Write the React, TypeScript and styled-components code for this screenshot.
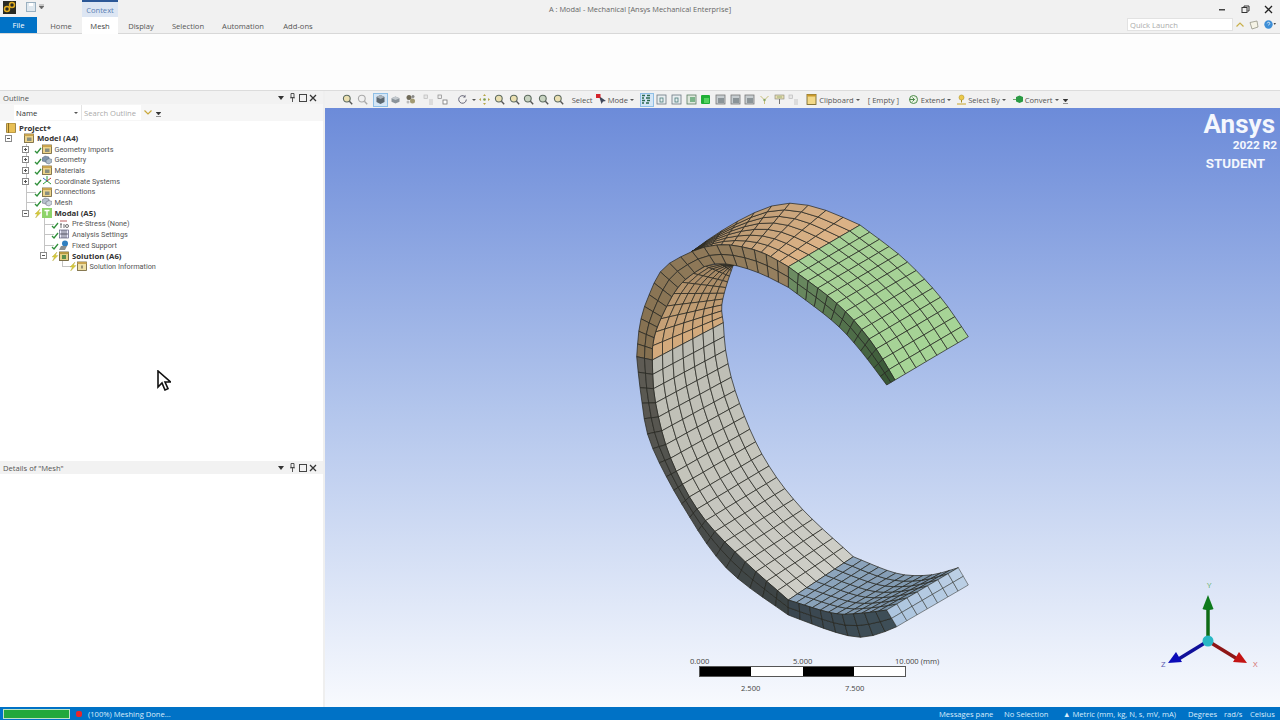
import React from "react";
import styled, { createGlobalStyle } from "styled-components";

const FONT = `"Open Sans", "Noto Sans", sans-serif`;

const Global = createGlobalStyle`
  html, body { margin: 0; padding: 0; background: #fff; overflow: hidden; }
  * { box-sizing: border-box; }
`;

const Page = styled.div`
  width: 1280px; height: 720px; display: flex; flex-direction: column; overflow: hidden; position: relative;
  font-family: ${FONT}; font-size: 7.6px; color: #444; background: #fff;
`;
const Ico = styled.svg<{ $ml?: number; $mt?: number }>`
  flex: none; margin-left: ${p => p.$ml ?? 0}px; margin-top: ${p => p.$mt ?? 0}px;
`;
const TitleBar = styled.div`
  height: 17px; display: grid; grid-template-columns: 1fr auto 1fr; background: #f1f1f1;
`;
const TitleLeft = styled.div`display: flex; align-items: flex-start; padding-left: 3px;`;
const QuickSave = styled.div`display: flex; align-items: center; gap: 3px; margin: 1px 0 0 10px; width: 56px; height: 12px;`;
const ContextTab = styled.div`
  width: 36px; height: 17px; background: #dde6f3; border-top: 2px solid #2b5797; color: #5b7fb3;
  display: flex; align-items: center; justify-content: center;
`;
const TitleText = styled.div`line-height: 17px; color: #666; font-size: 7.4px; transform: translateY(0.5px);`;
const WinControls = styled.div`display: flex; justify-content: flex-end; align-items: center; gap: 14.5px; padding: 1px 7px 0 0;`;
const TabBar = styled.div`
  height: 17px; display: flex; background: #f1f1f1; border-bottom: 1px solid #d8d8d8;
`;
const FileTab = styled.div`
  width: 37px; height: 16px; background: #0072c6; color: #fff; display: flex; align-items: center; justify-content: center;
`;
const Tab = styled.div<{ $w: number; $active?: boolean; $pl?: number }>`
  width: ${p => p.$w}px; height: ${p => (p.$active ? 17 : 16)}px; display: flex; align-items: center; justify-content: center;
  padding: 1px 0 0 ${p => p.$pl ?? 0}px;
  background: ${p => (p.$active ? "#fff" : "transparent")}; color: ${p => (p.$active ? "#444" : "#555")};
  z-index: 1;
`;
const TabRight = styled.div`margin-left: auto; display: flex; align-items: center; gap: 5px; padding-right: 4px; height: 15px;`;
const QuickInput = styled.div`
  width: 106px; height: 13px; background: #fff; border: 1px solid #e2e2e2; color: #aaa; line-height: 12px; padding-left: 2px; margin-right: -2px;
`;
const Ribbon = styled.div`height: 57px; background: #fdfdfd; border-bottom: 1px solid #dcdcdc;`;
const Main = styled.div`flex: 1; display: flex; min-height: 0;`;
const LeftPanel = styled.div`
  width: 325px; display: flex; flex-direction: column; background: #fff; border-right: 2px solid #efefef;
`;
const PaneHeader = styled.div`
  height: 13px; display: flex; align-items: center; gap: 4px; padding: 0 6px 0 3px; background: #f2f2f2; color: #555;
`;
const Gripper = styled.div`
  flex: 1; height: 5px; margin-right: 6px; opacity: .8;
  background-image: radial-gradient(#cfcfcf 0.6px, transparent 0.7px);
  background-size: 2px 2px;
`;
const PaneBtns = styled.div`display: flex; align-items: center;`;
const SearchRow = styled.div`
  height: 17px; display: flex; align-items: center; padding-left: 14px; background: #f6f6f6;
`;
const NameCombo = styled.div`
  width: 67px; height: 15px; background: #fff; display: flex; align-items: center; justify-content: space-between; padding: 0 3px 0 2px; color: #333;
`;
const SearchInput = styled.div`
  width: 60px; height: 15px; background: #fff; border-left: 1px solid #e4e4e4; color: #aaa; line-height: 16px; padding-left: 2px;
`;
const SearchTools = styled.div`display: flex; align-items: center; gap: 4px; margin-left: 3px;`;
const Tree = styled.div`height: 340px; padding-top: 1.5px;`;
const Row = styled.div<{ $start: number }>`
  position: relative; height: 10.67px; display: flex; align-items: center; padding-left: ${p => p.$start}px; white-space: nowrap; color: #444;
`;
const Expander = styled.div`width: 16px; display: flex; justify-content: center; z-index: 1;`;
const ExpBox = styled.div`
  width: 7px; height: 7px; border: 1px solid #8a8a8a; background: #fff; position: relative;
  &::before { content: ""; position: absolute; left: 1px; right: 1px; top: 2px; height: 1px; background: #555; }
`;
const ExpPlus = styled(ExpBox)`
  &::after { content: ""; position: absolute; top: 1px; bottom: 1px; left: 2px; width: 1px; background: #555; }
`;
const Mark = styled.div`width: 8px; height: 10px; display: flex; align-items: flex-end; z-index: 1;`;
const IconSlot = styled.div`width: 10px; height: 10px; margin-right: 3px; display: flex; z-index: 1;`;
const Label = styled.span<{ $bold?: boolean }>`
  font-family: ${p => (p.$bold ? FONT : `Roboto, ${FONT}`)};
  font-size: ${p => (p.$bold ? 7.8 : 7.3)}px;
  font-weight: ${p => (p.$bold ? 700 : 400)}; color: ${p => (p.$bold ? "#333" : "#555")};
`;
const VLine = styled.div<{ $x: number; $half?: boolean }>`
  position: absolute; left: ${p => p.$x}px; top: 0; width: 1px; height: ${p => (p.$half ? "50%" : "100%")}; background: #c4c4c4;
`;
const HLine = styled.div<{ $x: number }>`
  position: absolute; left: ${p => p.$x}px; top: 50%; width: 10px; height: 1px; background: #c4c4c4;
`;
const DetailBody = styled.div`flex: 1;`;
const Viewport = styled.div`flex: 1; display: flex; flex-direction: column; min-width: 0;`;
const Toolbar = styled.div`
  height: 17px; display: flex; align-items: center; padding-left: 15px; background: #f1f1f1; color: #555; white-space: nowrap;
`;
const TB = styled.div<{ $w?: number; $active?: boolean }>`
  width: ${p => p.$w ?? 14.7}px; height: 14px; flex: none; display: flex; align-items: center; justify-content: center;
  background: ${p => (p.$active ? "#d4e6f6" : "transparent")}; outline: ${p => (p.$active ? "1px solid #8fbfe6" : "none")}; outline-offset: -1px;
`;
const TBText = styled.div<{ $w: number; $pl?: number }>`
  width: ${p => p.$w}px; padding-left: ${p => p.$pl ?? 0}px; flex: none; display: flex; align-items: center; gap: 2px;
`;
const Caret = styled.i`
  display: inline-block; width: 0; height: 0; border-left: 2px solid transparent; border-right: 2px solid transparent; border-top: 2px solid #555;
`;
const TBSep = styled.div<{ $w: number }>`
  width: ${p => p.$w}px; flex: none; height: 13px;
`;
const Canvas = styled.div`
  flex: 1; position: relative; overflow: hidden;
  background: linear-gradient(180deg, #6c8bd9 0%, #b2c5ec 50%, #f8fafe 100%);
`;
const MeshSvg = styled.svg`position: absolute; inset: 0; width: 100%; height: 100%;`;
const Logo = styled.div`
  position: absolute; right: 3px; top: 2px; width: 80px; color: #f4f7fd; font-family: Roboto, sans-serif; font-weight: 700; text-align: right;
`;
const LogoMain = styled.div`font-size: 26px; line-height: 28px; margin-right: 2px; font-weight: 700;`;
const LogoYear = styled.div`font-size: 11.8px; line-height: 14px; margin-top: 0;`;
const LogoStudent = styled.div`font-size: 13.4px; line-height: 15px; margin: 4px 12px 0 0;`;
const Scale = styled.div`position: absolute; left: 374px; top: 547px; width: 207px; height: 40px; color: #444; font-size: 7.6px;`;
const ScaleSegs = styled.div`
  position: absolute; top: 11px; left: 0; right: 0; height: 11px; display: flex; border: 1px solid #555;
`;
const Seg = styled.div<{ $dark?: boolean }>`flex: 1; background: ${p => (p.$dark ? "#000" : "#fff")};`;
const ScaleLabel = styled.span<{ $x: number; $y: number }>`
  position: absolute; left: ${p => p.$x}px; top: ${p => p.$y}px; white-space: nowrap; line-height: 10px;
`;
const TriadSvg = styled.svg`position: absolute; left: 830px; top: 468px; width: 110px; height: 100px;`;
const Status = styled.div`
  height: 13px; display: flex; align-items: center; background: #0072c6; color: #d8ecfb; white-space: nowrap; padding-left: 3px;
`;
const Progress = styled.div`
  width: 67px; height: 10px; background: #22a83c; border: 1px solid #bfe3c6; margin-right: 6px;
`;
const Dot = styled.div`width: 6px; height: 6px; background: #e8262a; border-radius: 2px; margin-right: 6px;`;
const StatusRight = styled.div`margin-left: auto; display: flex; align-items: center;`;
const StatusItem = styled.span<{ $w: number }>`width: ${p => p.$w}px; display: inline-block;`;
const Pointer = styled.svg`position: absolute; left: 156px; top: 370px; width: 15px; height: 21px;`;

/* ---------- mesh geometry ---------- */
type P = [number, number];
const z5 = (l: number[][]): P[] => l.map(([x, y]) => [620 + x / 3, 190 + y / 3]);
const z6 = (l: number[][]): P[] => l.map(([x, y]) => [620 + x / 3, 400 + y / 3]);
function sample(pts: P[], n: number): P[] {
  const dense: P[] = [];
  for (let i = 0; i < pts.length - 1; i++) {
    const p0 = pts[Math.max(0, i - 1)], p1 = pts[i], p2 = pts[i + 1], p3 = pts[Math.min(pts.length - 1, i + 2)];
    for (let s = 0; s < 14; s++) {
      const t = s / 14, t2 = t * t, t3 = t2 * t;
      dense.push([0, 1].map(k => 0.5 * (2 * p1[k] + (p2[k] - p0[k]) * t + (2 * p0[k] - 5 * p1[k] + 4 * p2[k] - p3[k]) * t2 + (3 * p1[k] - p0[k] - 3 * p2[k] + p3[k]) * t3)) as P);
    }
  }
  dense.push(pts[pts.length - 1]);
  const len = [0];
  for (let i = 1; i < dense.length; i++) len.push(len[i - 1] + Math.hypot(dense[i][0] - dense[i - 1][0], dense[i][1] - dense[i - 1][1]));
  const out: P[] = [];
  let j = 0;
  for (let i = 0; i <= n; i++) {
    const target = (len[len.length - 1] * i) / n;
    while (j < dense.length - 2 && len[j + 1] < target) j++;
    const f = (target - len[j]) / Math.max(1e-6, len[j + 1] - len[j]);
    out.push([dense[j][0] + (dense[j + 1][0] - dense[j][0]) * f, dense[j][1] + (dense[j + 1][1] - dense[j][1]) * f]);
  }
  return out;
}
type RGB = [number, number, number];
type Cell = { points: string; fill: string; dark: number };
function strip(a: P[], b: P[], nu: number, nv: number, c0: RGB, c1: RGB, dark = 0.8): Cell[] {
  const A = sample(a, nu), B = sample(b, nu), cells: Cell[] = [];
  const at = (i: number, j: number): string => {
    const t = j / nv;
    return `${(A[i][0] + (B[i][0] - A[i][0]) * t).toFixed(1)},${(A[i][1] + (B[i][1] - A[i][1]) * t).toFixed(1)}`;
  };
  for (let i = 0; i < nu; i++) {
    const t = (i + 0.5) / nu;
    const c = [0, 1, 2].map(k => Math.round(c0[k] + (c1[k] - c0[k]) * t));
    for (let j = 0; j < nv; j++) {
      cells.push({ points: `${at(i, j)} ${at(i + 1, j)} ${at(i + 1, j + 1)} ${at(i, j + 1)}`, fill: `rgb(${c.join(",")})`, dark });
    }
  }
  return cells;
}
const INNER_L1 = z5([[340, 225], [280, 222], [235, 240], [175, 290], [125, 380], [100, 450], [97, 510]]);
const INNER_R1 = z5([[340, 225], [318, 290], [305, 350], [310, 398]]);
const INNER_L2 = [...z5([[97, 510]]), ...z6([[105, 0], [150, 170], [240, 340], [370, 480], [505, 600]])];
const INNER_R2 = [...z5([[310, 398], [320, 500], [355, 630]]), ...z6([[430, 170], [540, 320], [700, 470]])];
const INNER_L3 = z6([[505, 600], [640, 640], [720, 640], [800, 630]]);
const INNER_R3 = z6([[700, 470], [830, 520], [930, 525], [1015, 503]]);
const TOP_F1 = z5([[215, 185], [300, 125], [410, 65], [500, 40], [600, 55], [720, 105]]);
const TOP_N1 = z5([[215, 185], [270, 168], [330, 165], [420, 185], [505, 230]]);
const TOP_F2 = z5([[720, 105], [850, 205], [960, 320], [1045, 440]]);
const TOP_N2 = z5([[505, 230], [650, 340], [750, 450], [825, 570]]);
const RIM_O1 = z5([[825, 570], [750, 450], [650, 340], [505, 230]]);
const RIM_I1 = z5([[800, 585], [720, 480], [640, 395], [505, 292]]);
const RIM_O2 = z5([[505, 230], [420, 185], [330, 165], [270, 168], [215, 185], [130, 235], [85, 320], [60, 400], [50, 500]]);
const RIM_I2 = z5([[505, 292], [420, 250], [340, 225], [280, 222], [235, 240], [175, 290], [125, 380], [100, 450], [97, 510]]);
const RIM_O3 = [...z5([[50, 500]]), ...z6([[65, 0], [92, 130], [190, 320], [320, 505], [505, 645]])];
const RIM_I3 = [...z5([[97, 510]]), ...z6([[105, 0], [150, 170], [240, 340], [370, 480], [505, 600]])];
const RIM_O4 = z6([[505, 645], [640, 695], [720, 712], [780, 700], [830, 680]]);
const RIM_I4 = z6([[505, 600], [640, 640], [720, 640], [800, 630]]);
const END_A = z6([[800, 630], [1015, 503]]);
const END_B = z6([[830, 680], [1045, 555]]);

const CELLS: Cell[] = [
  ...strip(INNER_L1, INNER_R1, 10, 7, [150, 125, 92], [214, 172, 126]),
  ...strip(INNER_L2, INNER_R2, 20, 7, [188, 188, 178], [206, 206, 200]),
  ...strip(INNER_L3, INNER_R3, 12, 7, [142, 166, 190], [120, 145, 168]),
  ...strip(TOP_N1, TOP_F1, 10, 7, [168, 140, 104], [222, 180, 136]),
  ...strip(TOP_N2, TOP_F2, 13, 7, [166, 208, 150], [166, 212, 150]),
  ...strip(RIM_O1, RIM_I1, 13, 2, [55, 85, 52], [110, 142, 100]),
  ...strip(RIM_O2, RIM_I2, 18, 2, [150, 128, 96], [132, 112, 80]),
  ...strip(RIM_O3, RIM_I3, 20, 2, [95, 92, 84], [58, 66, 68]),
  ...strip(RIM_O4, RIM_I4, 9, 2, [58, 70, 78], [62, 78, 88]),
  ...strip(END_A, END_B, 7, 2, [172, 196, 222], [188, 208, 230], 0.55),
];

/* ---------- small drawn icons ---------- */
const Check = () => (
  <svg width="8" height="7" viewBox="0 0 8 7"><path d="M1 4l2 2 4-5" fill="none" stroke="#2f8f3a" strokeWidth="1.3" /></svg>
);
const Bolt = () => (
  <svg width="8" height="9" viewBox="0 0 8 9"><path d="M6 0L1 5h2.400L1.600 9 7 3.600H4.400z" fill="#d8cc3a" stroke="#a89a20" strokeWidth=".3" /></svg>
);
type TreeKind = "book" | "box" | "geo" | "coord" | "mesh" | "modal" | "pre" | "set" | "sup" | "sol" | "info";
const TreeIcon = ({ kind }: { kind: TreeKind }) => {
  const s = { width: 10, height: 10, viewBox: "0 0 10 10" };
  switch (kind) {
    case "book":
      return <svg {...s}><rect x=".5" y="0" width="9" height="10" rx="1" fill="#e8bf55" stroke="#7a6020" strokeWidth=".7" /><rect x="2" y="0" width="1" height="10" fill="#8a6d22" /></svg>;
    case "box":
      return <svg {...s}><rect x=".5" y="1" width="9" height="8.5" fill="#ecd38a" stroke="#6b5c32" strokeWidth=".8" /><rect x=".5" y="1" width="9" height="2" fill="#c9a44f" /><rect x="3" y="4.5" width="4.5" height="3.5" fill="#8a8f80" /></svg>;
    case "geo":
      return <svg {...s}><path d="M0 3l3-2 4 1v3l-3 2-4-1z" fill="#7f95ad" stroke="#55677a" strokeWidth=".5" /><path d="M4 5l3-1.500 3 1V7l-3 2-3-1z" fill="#aebdca" stroke="#55677a" strokeWidth=".5" /></svg>;
    case "coord":
      return <svg {...s}><path d="M5 0v5M5 5l4 3M5 5L1 8" stroke="#2d9a3a" strokeWidth="1" /><path d="M5 5L9 2" stroke="#c03a30" strokeWidth="1" /><path d="M5 5L1 2" stroke="#3a60c0" strokeWidth="1" /></svg>;
    case "mesh":
      return <svg {...s}><path d="M0 3l3-2 4 1v3l-3 2-4-1z" fill="#b5c0cc" stroke="#667" strokeWidth=".5" /><path d="M4 5l3-1.500 3 1V7l-3 2-3-1z" fill="#ccd5dd" stroke="#667" strokeWidth=".5" /></svg>;
    case "modal":
      return <svg {...s}><rect width="10" height="10" fill="#8ed36a" /><path d="M2.500 2.500h5M5 2.500v5" stroke="#fff" strokeWidth="1.400" /></svg>;
    case "pre":
      return <svg {...s}><path d="M1 2h7" stroke="#a33" strokeWidth=".8" /><path d="M1 5h2M2 5v4M4 6h2M4 8h2" stroke="#333" strokeWidth=".7" fill="none" /><circle cx="8" cy="7" r="1.500" fill="none" stroke="#333" strokeWidth=".7" /></svg>;
    case "set":
      return <svg {...s}><rect x=".5" y="1" width="9" height="8" fill="#eef" stroke="#446" strokeWidth=".6" /><path d="M3 1v8M5 1v8M7 1v8M1 5h8" stroke="#334" strokeWidth=".7" /></svg>;
    case "sup":
      return <svg {...s}><circle cx="6" cy="3.600" r="3" fill="#2f7fc0" /><path d="M0 10l2-4h6l-2 4z" fill="#8a8f90" /></svg>;
    case "sol":
      return <svg {...s}><rect x=".5" y="1" width="9" height="8.500" fill="#e4cf84" stroke="#5c5028" strokeWidth=".8" /><rect x=".5" y="1" width="9" height="2" fill="#b89a42" /><rect x="3" y="4" width="4" height="4" fill="#5c8f4c" /></svg>;
    default:
      return <svg {...s}><rect x=".5" y="1" width="9" height="8.500" fill="#efe0a4" stroke="#6b5c32" strokeWidth=".8" /><rect x=".5" y="1" width="9" height="2" fill="#c9a44f" /><path d="M5 4.500v3" stroke="#444" strokeWidth="1" /></svg>;
  }
};

type ToolKind = "zoom" | "zoomg" | "zoomb" | "cube" | "cube2" | "cubes" | "pg" | "pg2" | "rot" | "pan" | "sel" | "nam" | "doc" | "docg" | "docgg" | "gray" | "ypt" | "yflag" | "clip" | "ext" | "pin" | "conv";
const ToolIcon = ({ kind }: { kind: ToolKind }) => {
  const s = { width: 11, height: 11, viewBox: "0 0 11 11" };
  if (kind === "zoom" || kind === "zoomg" || kind === "zoomb")
    return (
      <svg {...s}>
        <circle cx="4.800" cy="4.600" r="3.400" fill={kind === "zoom" ? "#eadfb0" : kind === "zoomb" ? "#c7d3c0" : "#f0f0f0"} stroke={kind === "zoomg" ? "#aaa" : "#5d6b60"} strokeWidth="1.100" />
        <path d="M7.400 7.200l2.800 3" stroke={kind === "zoomg" ? "#aaa" : "#555"} strokeWidth="1.300" />
      </svg>
    );
  switch (kind) {
    case "cube":
      return <svg {...s}><path d="M5.500 1l4 2v5l-4 2-4-2V3z" fill="#5b6770" /><path d="M1.500 3l4 2 4-2-4-2z" fill="#a9b2b9" /></svg>;
    case "cube2":
      return <svg {...s}><path d="M5.500 2.500l4 1.700v3.600l-4 1.700-4-1.700V4.200z" fill="#8b949b" /><path d="M1.500 4.200l4 1.700 4-1.700-4-1.700z" fill="#c3c9ce" /></svg>;
    case "cubes":
      return <svg {...s}><circle cx="4" cy="3.500" r="2.500" fill="#6f6a58" /><circle cx="7.500" cy="7" r="2.500" fill="#a29a72" /><circle cx="8" cy="2.500" r="1.500" fill="#888" /><circle cx="3" cy="8" r="1.500" fill="#bbb" /></svg>;
    case "pg":
      return <svg {...s}><rect x="1" y="1" width="3.500" height="3.500" fill="#e6e6e6" stroke="#bbb" strokeWidth=".7" /><path d="M6 6h4M6 8h4M6 10h4" stroke="#bbb" strokeWidth=".8" /></svg>;
    case "pg2":
      return <svg {...s}><rect x="1" y="1" width="3.500" height="3.500" fill="#eee" stroke="#888" strokeWidth=".7" /><rect x="6" y="6" width="4" height="4" fill="#fff" stroke="#777" strokeWidth=".8" /></svg>;
    case "rot":
      return <svg {...s}><path d="M9.300 5.500a3.800 3.800 0 1 1-1.300-2.900" fill="none" stroke="#667" strokeWidth="1" /><path d="M8.500 0.800v2.600H6z" fill="#667" /></svg>;
    case "pan":
      return <svg {...s}><path d="M5.500 0l1.500 2H4zM5.500 11L4 9h3zM0 5.500L2 4v3zM11 5.500L9 4v3z" fill="#b9a64a" /><circle cx="5.500" cy="5.500" r="1.300" fill="#7a9b4a" /></svg>;
    case "sel":
      return <svg {...s}><path d="M3 2l7 5-3 .5L5.500 10z" fill="#40485a" /><rect x="0" y="0" width="4.500" height="4" fill="#d4232a" /></svg>;
    case "nam":
      return <svg {...s}><path d="M1 1.500h3M6 1.500h3M1 4h2M5 4h4M1 6.500h3M6 6.500h3M1 9h2M5 9h3" stroke="#2a6a50" strokeWidth="1.300" /></svg>;
    case "doc":
      return <svg {...s}><rect x="1" y="1" width="9" height="9" fill="#e8eef0" stroke="#6b7780" strokeWidth=".8" /><rect x="4" y="4" width="3" height="4" fill="none" stroke="#4b7a7a" strokeWidth=".8" /></svg>;
    case "docg":
      return <svg {...s}><rect x="1" y="1" width="9" height="9" fill="#dfe8dd" stroke="#5a7a62" strokeWidth=".8" /><rect x="4" y="3" width="5" height="5" fill="#7cb48a" /></svg>;
    case "docgg":
      return <svg {...s}><rect x="1" y="1" width="9" height="9" rx="1" fill="#1fae36" /><rect x="4" y="4" width="5" height="5" fill="#53d35f" /></svg>;
    case "gray":
      return <svg {...s}><rect x="1" y="1" width="9" height="9" fill="#c7cdd0" stroke="#777" strokeWidth=".8" /><rect x="3" y="4" width="6" height="5" fill="#8b9498" /></svg>;
    case "ypt":
      return <svg {...s}><path d="M5.500 6V10M5.500 6L1.500 2M5.500 6L9.500 2" stroke="#c9bf7a" strokeWidth="1" /><circle cx="5.500" cy="6" r="1.200" fill="#88a866" /></svg>;
    case "yflag":
      return <svg {...s}><rect x="1" y="1" width="9" height="4" fill="#e6dcb2" stroke="#887" strokeWidth=".6" /><path d="M5.500 5v5" stroke="#777" strokeWidth="1" /><path d="M3 3h5" stroke="#8a6" strokeWidth=".8" /></svg>;
    case "clip":
      return <svg {...s}><rect x="1" y="0.500" width="9" height="10" fill="#f3d988" stroke="#6a5a20" strokeWidth=".8" /><rect x="1" y="0.500" width="9" height="2" fill="#c99a2c" /></svg>;
    case "ext":
      return <svg {...s}><circle cx="5.500" cy="5.500" r="4" fill="#e8f2e2" stroke="#4d8a4a" strokeWidth="1" /><path d="M1.500 5.500h5M4.500 3.500l2 2-2 2" stroke="#3c7d3c" strokeWidth=".9" fill="none" /></svg>;
    case "pin":
      return <svg {...s}><circle cx="5.500" cy="3.500" r="2.500" fill="#ecc94a" stroke="#a58a20" strokeWidth=".5" /><path d="M5.500 6v2.500" stroke="#a58a20" strokeWidth="1" /><path d="M1 10h9" stroke="#c9a428" strokeWidth="1" /></svg>;
    default:
      return <svg {...s}><path d="M0 5.500h3" stroke="#6aa86a" strokeWidth="1" /><path d="M3 3l3.500-1.500L10 3v4.500L6.500 9 3 7.500z" fill="#2a9a44" /></svg>;
  }
};
const PaneControls = () => (
  <PaneBtns>
    <Ico width="6" height="4" viewBox="0 0 6 4"><path d="M0 0h6L3 4z" fill="#333" /></Ico>
    <Ico width="7" height="9" viewBox="0 0 7 9" $ml={4.5}><path d="M2 .5h3v4h-3zM1 4.800h5M3.500 5v4" stroke="#444" strokeWidth=".9" fill="none" /></Ico>
    <Ico width="8" height="8" viewBox="0 0 8 8" $ml={3.5}><rect x=".5" y=".5" width="7" height="7" fill="none" stroke="#444" /></Ico>
    <Ico width="8" height="8" viewBox="0 0 8 8" $ml={2}><path d="M1 1l6 6M7 1l-6 6" stroke="#333" strokeWidth="1.300" /></Ico>
  </PaneBtns>
);

type TreeRow = {
  level: number; text: string; icon: TreeKind; bold?: boolean; mark?: "check" | "bolt"; exp?: "plus" | "minus";
  lines: { x: number; half?: boolean }[]; h?: number;
};
const ROWS: TreeRow[] = [
  { level: 1, text: "Model (A4)", icon: "box", bold: true, exp: "minus", lines: [] },
  { level: 2, text: "Geometry Imports", icon: "box", mark: "check", exp: "plus", lines: [{ x: 26 }] },
  { level: 2, text: "Geometry", icon: "geo", mark: "check", exp: "plus", lines: [{ x: 26 }] },
  { level: 2, text: "Materials", icon: "box", mark: "check", exp: "plus", lines: [{ x: 26 }] },
  { level: 2, text: "Coordinate Systems", icon: "coord", mark: "check", exp: "plus", lines: [{ x: 26 }] },
  { level: 2, text: "Connections", icon: "box", mark: "check", lines: [{ x: 26 }], h: 26 },
  { level: 2, text: "Mesh", icon: "mesh", mark: "check", lines: [{ x: 26 }], h: 26 },
  { level: 2, text: "Modal (A5)", icon: "modal", bold: true, mark: "bolt", exp: "minus", lines: [{ x: 26, half: true }] },
  { level: 3, text: "Pre-Stress (None)", icon: "pre", mark: "check", lines: [{ x: 44 }], h: 44 },
  { level: 3, text: "Analysis Settings", icon: "set", mark: "check", lines: [{ x: 44 }], h: 44 },
  { level: 3, text: "Fixed Support", icon: "sup", mark: "check", lines: [{ x: 44 }], h: 44 },
  { level: 3, text: "Solution (A6)", icon: "sol", bold: true, mark: "bolt", exp: "minus", lines: [{ x: 44, half: true }] },
  { level: 4, text: "Solution Information", icon: "info", mark: "bolt", lines: [{ x: 62, half: true }], h: 62 },
];

const TOOLS: (ToolKind | { gap: number } | { active: ToolKind })[] = [
  "zoom", "zoomg", { gap: 4 }, { active: "cube" }, "cube2", "cubes", { gap: 3.5 }, "pg", "pg2", { gap: 4.5 },
];
const TOOLS2: ToolKind[] = ["zoom", "zoom", "zoomb", "zoomb", "zoom"];
const TOOLS3: ToolKind[] = ["doc", "doc", "docg", "docgg", "gray", "gray", "gray", "ypt", "yflag", "pg"];

export default function App() {
  return (
    <Page>
      <Global />
      <TitleBar>
        <TitleLeft>
          <Ico width="13" height="13" viewBox="0 0 13 13" $mt={1}>
            <rect width="13" height="13" fill="#2a2a22" />
            <circle cx="4" cy="8" r="2.500" fill="none" stroke="#e2ac1e" strokeWidth="1.500" />
            <circle cx="9" cy="4" r="2.500" fill="none" stroke="#e2ac1e" strokeWidth="1.500" />
          </Ico>
          <QuickSave>
            <svg width="10" height="10" viewBox="0 0 10 10"><rect x=".5" y=".5" width="9" height="9" fill="#dfe8ef" stroke="#9ab0c0" /><rect x="3" y="1" width="4" height="3" fill="#fff" /></svg>
            <svg width="5" height="6" viewBox="0 0 5 6"><path d="M0 0h5M0 2h5L2.500 5z" stroke="#666" strokeWidth=".6" fill="#666" /></svg>
          </QuickSave>
          <ContextTab>Context</ContextTab>
        </TitleLeft>
        <TitleText>A : Modal - Mechanical [Ansys Mechanical Enterprise]</TitleText>
        <WinControls>
          <svg width="7" height="3" viewBox="0 0 7 3"><rect y="1" width="6" height="1.500" fill="#444" /></svg>
          <svg width="9" height="9" viewBox="0 0 9 9"><path d="M3 2.500V1h5v5H6.500" fill="none" stroke="#333" /><rect x="1" y="2.500" width="5" height="5" fill="none" stroke="#333" /></svg>
          <svg width="9" height="9" viewBox="0 0 9 9"><path d="M1 1l7 7M8 1l-7 7" stroke="#222" strokeWidth="1.300" /></svg>
        </WinControls>
      </TitleBar>
      <TabBar>
        <FileTab>File</FileTab>
        <Tab $w={45} $pl={3}>Home</Tab>
        <Tab $w={36} $active>Mesh</Tab>
        <Tab $w={46}>Display</Tab>
        <Tab $w={48}>Selection</Tab>
        <Tab $w={62}>Automation</Tab>
        <Tab $w={48}>Add-ons</Tab>
        <TabRight>
          <QuickInput>Quick Launch</QuickInput>
          <svg width="8" height="5" viewBox="0 0 8 5"><path d="M.5 4.500L4 1l3.500 3.500" fill="none" stroke="#c9b04a" strokeWidth="1.200" /></svg>
          <svg width="10" height="10" viewBox="0 0 10 10"><path d="M1 2.500L8 1l1 6-6 2z" fill="#f5f3e6" stroke="#8a8a78" strokeWidth=".7" /></svg>
          <svg width="12" height="9" viewBox="0 0 12 9"><circle cx="4.500" cy="4.500" r="4.200" fill="#3d8ed6" /><path d="M3.200 3.400c.2-1.500 2.600-1.500 2.600 0 0 1-1.300 1-1.300 2" stroke="#fff" strokeWidth=".8" fill="none" /><path d="M9.500 3h2.500l-1.200 2z" fill="#444" /></svg>
        </TabRight>
      </TabBar>
      <Ribbon />
      <Main>
        <LeftPanel>
          <PaneHeader>
            Outline
            <Gripper />
            <PaneControls />
          </PaneHeader>
          <SearchRow>
            <NameCombo>Name <Caret /></NameCombo>
            <SearchInput>Search Outline</SearchInput>
            <SearchTools>
              <svg width="8" height="5" viewBox="0 0 8 5"><path d="M.5.5L4 4 7.500.5" fill="none" stroke="#c9a83a" strokeWidth="1.200" /></svg>
              <Ico width="5" height="6" viewBox="0 0 5 6" $mt={5}><path d="M0 0h5L2.500 3zM0 4.500h5" fill="#333" stroke="#333" strokeWidth=".5" /></Ico>
            </SearchTools>
          </SearchRow>
          <Tree>
            <Row $start={6}>
              <IconSlot><TreeIcon kind="book" /></IconSlot>
              <Label $bold>Project*</Label>
            </Row>
            {ROWS.map(r => (
              <Row key={r.text} $start={(r.level - 1) * 17.5}>
                {r.lines.map(l => <VLine key={l.x} $x={l.x} $half={l.half} />)}
                {r.h !== undefined && <HLine $x={r.h} />}
                <Expander>{r.exp === "plus" ? <ExpPlus /> : r.exp === "minus" ? <ExpBox /> : null}</Expander>
                <Mark>{r.mark === "check" ? <Check /> : r.mark === "bolt" ? <Bolt /> : null}</Mark>
                <IconSlot><TreeIcon kind={r.icon} /></IconSlot>
                <Label $bold={r.bold}>{r.text}</Label>
              </Row>
            ))}
          </Tree>
          <PaneHeader>
            Details of "Mesh"
            <Gripper />
            <PaneControls />
          </PaneHeader>
          <DetailBody />
        </LeftPanel>
        <Viewport>
          <Toolbar>
            {TOOLS.map((t, i) =>
              typeof t === "string" ? <TB key={i}><ToolIcon kind={t} /></TB>
                : "gap" in t ? <TBSep key={i} $w={t.gap} />
                  : <TB key={i} $active><ToolIcon kind={t.active} /></TB>
            )}
            <TB><ToolIcon kind="rot" /></TB>
            <TB $w={8}><Caret /></TB>
            <TB><ToolIcon kind="pan" /></TB>
            {TOOLS2.map((k, i) => <TB key={i}><ToolIcon kind={k} /></TB>)}
            <TBSep $w={6} />
            <TBText $w={24}>Select</TBText>
            <TB $w={11}><ToolIcon kind="sel" /></TB>
            <TBText $w={33} $pl={1}>Mode<Caret /></TBText>
            <TB $active><ToolIcon kind="nam" /></TB>
            {TOOLS3.map((k, i) => <TB key={i}><ToolIcon kind={k} /></TB>)}
            <TBSep $w={4} />
            <TB $w={13}><ToolIcon kind="clip" /></TB>
            <TBText $w={49.5} $pl={1}>Clipboard<Caret /></TBText>
            <TBText $w={38}>[ Empty ]</TBText>
            <TBSep $w={1} />
            <TB $w={14}><ToolIcon kind="ext" /></TB>
            <TBText $w={34.5}>Extend<Caret /></TBText>
            <TB $w={13}><ToolIcon kind="pin" /></TB>
            <TBText $w={44.5}>Select By<Caret /></TBText>
            <TB $w={12}><ToolIcon kind="conv" /></TB>
            <TBText $w={38}>Convert<Caret /></TBText>
            <Ico width="5" height="6" viewBox="0 0 5 6" $mt={4}><path d="M0 0h5L2.500 3zM0 4.500h5" fill="#333" stroke="#333" strokeWidth=".5" /></Ico>
          </Toolbar>
          <Canvas>
            <MeshSvg viewBox="325 108 955 599">
              <g stroke="#26261e" strokeWidth=".9" strokeLinejoin="round">
                {CELLS.map((c, i) => <polygon key={i} points={c.points} fill={c.fill} strokeOpacity={c.dark} />)}
              </g>
            </MeshSvg>
            <Logo>
              <LogoMain>Ansys</LogoMain>
              <LogoYear>2022 R2</LogoYear>
              <LogoStudent>STUDENT</LogoStudent>
            </Logo>
            <Scale>
              <ScaleLabel $x={-9} $y={1}>0.000</ScaleLabel>
              <ScaleLabel $x={94} $y={1}>5.000</ScaleLabel>
              <ScaleLabel $x={196} $y={1}>10.000 (mm)</ScaleLabel>
              <ScaleSegs><Seg $dark /><Seg /><Seg $dark /><Seg /></ScaleSegs>
              <ScaleLabel $x={42} $y={28}>2.500</ScaleLabel>
              <ScaleLabel $x={146} $y={28}>7.500</ScaleLabel>
            </Scale>
            <TriadSvg viewBox="0 0 110 100">
              <path d="M53 65V30" stroke="#0d6b16" strokeWidth="3.500" />
              <path d="M53 19l-5.500 14c3 1.500 8 1.500 11 0z" fill="#0e7a1c" />
              <path d="M53 65L84 84" stroke="#8e1616" strokeWidth="3.500" />
              <path d="M92 87l-14-1 6-10z" fill="#c31414" />
              <path d="M53 65L22 84" stroke="#10109a" strokeWidth="3.500" />
              <path d="M13 87l14-1-6-10z" fill="#0b0bb8" />
              <circle cx="53" cy="65" r="5.500" fill="#29b8c4" />
              <text x="52" y="12" fontSize="8" fill="#5fb06a" fontFamily="Open Sans">Y</text>
              <text x="6" y="91" fontSize="8" fill="#5a5ab0" fontFamily="Open Sans">Z</text>
              <text x="98" y="91" fontSize="8" fill="#d46a6a" fontFamily="Open Sans">X</text>
            </TriadSvg>
          </Canvas>
        </Viewport>
      </Main>
      <Status>
        <Progress />
        <Dot />
        (100%) Meshing Done...
        <StatusRight>
          <StatusItem $w={65}>Messages pane</StatusItem>
          <StatusItem $w={59}>No Selection</StatusItem>
          <StatusItem $w={125}>▲ Metric (mm, kg, N, s, mV, mA)</StatusItem>
          <StatusItem $w={36}>Degrees</StatusItem>
          <StatusItem $w={26}>rad/s</StatusItem>
          <StatusItem $w={30}>Celsius</StatusItem>
        </StatusRight>
      </Status>
      <Pointer viewBox="0 0 15 21">
        <path d="M2 1v16l4-4 3 7 3-1.300-3-6.700h5.500z" fill="#fff" stroke="#111" strokeWidth="1.600" />
      </Pointer>
    </Page>
  );
}
